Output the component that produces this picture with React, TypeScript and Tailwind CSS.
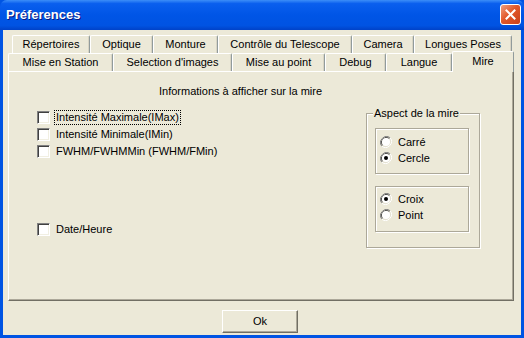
import React from 'react';

const rowOne = [
  { label: 'Répertoires', w: 'w-[78px]' },
  { label: 'Optique', w: 'w-[63px]' },
  { label: 'Monture', w: 'w-[65px]' },
  { label: 'Contrôle du Telescope', w: 'w-[134px]' },
  { label: 'Camera', w: 'w-[62px]' },
  { label: 'Longues Poses', w: 'w-[98px]' },
];

const rowTwo = [
  { label: 'Mise en Station', w: 'w-[105px]' },
  { label: "Selection d'images", w: 'w-[119px]' },
  { label: 'Mise au point', w: 'w-[93px]' },
  { label: 'Debug', w: 'w-[61px]' },
  { label: 'Langue', w: 'w-[66px]' },
];

function Tab({ label, w }: { label: string; w: string }) {
  return (
    <div
      className={`${w} h-[18px] flex items-center justify-center border-t border-l border-t-white border-l-white border-r border-r-[#919b9c] shadow-[inset_-1px_0_0_#d8d4c4] rounded-t-[2px] leading-none`}
    >
      {label}
    </div>
  );
}

function CheckBox() {
  return (
    <span className="w-[13px] h-[13px] shrink-0 border border-t-[#808080] border-l-[#808080] border-b-white border-r-white bg-white shadow-[inset_1px_1px_0_#404040,inset_-1px_-1px_0_#f1efe2]" />
  );
}

function Radio({ checked }: { checked?: boolean }) {
  return (
    <svg width="12" height="12" viewBox="0 0 12 12" className="shrink-0">
      <path d="M10.2 1.8 A6 6 0 0 0 1.8 10.2" fill="none" stroke="#808080" strokeWidth="1" />
      <path d="M1.8 10.2 A6 6 0 0 0 10.2 1.8" fill="none" stroke="#ffffff" strokeWidth="1" />
      <path d="M9.5 2.5 A5 5 0 0 0 2.5 9.5" fill="none" stroke="#404040" strokeWidth="1" />
      <path d="M2.5 9.5 A5 5 0 0 0 9.5 2.5" fill="none" stroke="#e4e1d2" strokeWidth="1" />
      <circle cx="6" cy="6" r="4" fill="#ffffff" />
      {checked && <circle cx="6" cy="6" r="2" fill="#000000" />}
    </svg>
  );
}

function CheckRow({ label, focus }: { label: string; focus?: boolean }) {
  return (
    <div className="h-[17px] flex items-center gap-[5px]">
      <CheckBox />
      <span className={`leading-[13px] px-[1px] ${focus ? 'outline outline-1 outline-dotted outline-black' : ''}`}>
        {label}
      </span>
    </div>
  );
}

function RadioRow({ label, checked }: { label: string; checked?: boolean }) {
  return (
    <div className="h-[16px] flex items-center gap-[6px]">
      <Radio checked={checked} />
      <span className="leading-[13px]">{label}</span>
    </div>
  );
}

export default function App() {
  return (
    <div className="w-[524px] h-[338px] flex flex-col bg-[#0054e3] font-['Liberation_Sans',Arial,sans-serif] text-[11px] text-black overflow-hidden">
      {/* title bar */}
      <div className="h-[30px] shrink-0 flex items-center justify-between pl-[6px] pr-[3px] rounded-t-[7px] bg-[linear-gradient(to_bottom,#3c8ef8_0%,#0a5fee_12%,#0055e6_50%,#0053e2_85%,#0042c8_100%)]">
        <span className="text-white font-bold text-[13px] [text-shadow:1px_1px_0_#0a1a80]">Préferences</span>
        <div className="w-[21px] h-[21px] mb-[1px] rounded-[3px] border border-white bg-[linear-gradient(135deg,#f0a080_0%,#e2582a_45%,#c8401a_100%)] flex items-center justify-center">
          <svg width="11" height="11" viewBox="0 0 11 11">
            <path d="M1.5 1.5 L9.5 9.5 M9.5 1.5 L1.5 9.5" stroke="#ffffff" strokeWidth="2" strokeLinecap="square" />
          </svg>
        </div>
      </div>

      {/* body */}
      <div className="flex-1 mx-[3px] mb-[3px] bg-[#ece9d8] flex flex-col">
        <div className="pt-[5px]">
          <div className="flex ml-[9px] h-[18px]">
            {rowOne.map((t) => (
              <Tab key={t.label} {...t} />
            ))}
          </div>
          <div className="flex items-end ml-[5px] h-[18px]">
            {rowTwo.map((t) => (
              <Tab key={t.label} {...t} />
            ))}
            <div className="relative z-10 w-[62px] h-[21px] -mb-px bg-[#ece9d8] flex items-start justify-center pt-[3px] border-t border-l border-t-white border-l-white border-r border-r-[#919b9c] rounded-t-[2px] leading-[13px]">
              Mire
            </div>
          </div>
        </div>

        {/* panel */}
        <div className="ml-[5px] w-[506px] h-[230px] border border-t-white border-l-white border-r-[#716f64] border-b-[#716f64] shadow-[inset_-1px_-1px_0_#aca899] flex flex-col">
          <div className="pt-[13px] pl-[150px] leading-[13px]">Informations à afficher sur la mire</div>
          <div className="flex">
            <div className="flex flex-col pl-[28px] pt-[11px]">
              <CheckRow label="Intensité Maximale(IMax)" focus />
              <CheckRow label="Intensité Minimale(IMin)" />
              <CheckRow label="FWHM/FWHMMin (FWHM/FMin)" />
              <div className="mt-[61px]">
                <CheckRow label="Date/Heure" />
              </div>
            </div>

            <div className="ml-auto mr-[33px] mt-[15px] relative w-[114px] h-[135px] border border-[#aca899] shadow-[inset_1px_1px_0_#ffffff,1px_1px_0_#ffffff] pl-[8px] pt-[14px]">
              <span className="absolute left-[6px] -top-[7px] px-[1px] bg-[#ece9d8] leading-[13px]">Aspect de la mire</span>
              <div className="w-[94px] h-[46px] border border-[#aca899] shadow-[inset_1px_1px_0_#ffffff,1px_1px_0_#ffffff] pl-[4px] pt-[5px]">
                <RadioRow label="Carré" />
                <RadioRow label="Cercle" checked />
              </div>
              <div className="mt-[12px] w-[94px] h-[46px] border border-[#aca899] shadow-[inset_1px_1px_0_#ffffff,1px_1px_0_#ffffff] pl-[4px] pt-[4px]">
                <RadioRow label="Croix" checked />
                <RadioRow label="Point" />
              </div>
            </div>
          </div>
        </div>

        {/* bottom */}
        <div className="flex justify-center pt-[9px] pr-[4px]">
          <button className="w-[76px] h-[23px] bg-[#ece9d8] border border-t-white border-l-white border-r-[#716f64] border-b-[#716f64] shadow-[inset_-1px_-1px_0_#aca899] leading-none">
            Ok
          </button>
        </div>
      </div>
    </div>
  );
}
